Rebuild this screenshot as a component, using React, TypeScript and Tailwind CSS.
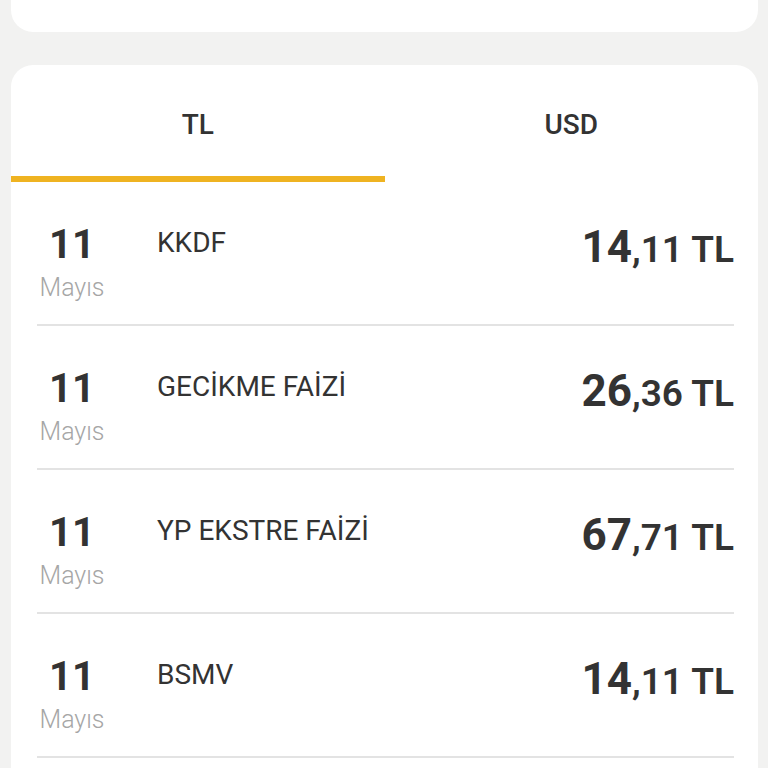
const rows = [
  { day: '11', month: 'Mayıs', title: 'KKDF', whole: '14', rest: ',11 TL' },
  { day: '11', month: 'Mayıs', title: 'GECİKME FAİZİ', whole: '26', rest: ',36 TL' },
  { day: '11', month: 'Mayıs', title: 'YP EKSTRE FAİZİ', whole: '67', rest: ',71 TL' },
  { day: '11', month: 'Mayıs', title: 'BSMV', whole: '14', rest: ',11 TL' },
]

export default function App() {
  return (
    <div
      className="flex h-[768px] flex-col overflow-hidden bg-[#f2f2f1] pl-[11px] pr-[10px] text-[#333]"
      style={{ fontFamily: 'Roboto, "Liberation Sans", sans-serif' }}
    >
      <div className="h-[32px] shrink-0 rounded-b-[22px] bg-white" />
      <div className="mt-[33px] flex-1 rounded-t-[22px] bg-white">
        <div className="flex">
          <Tab label="TL" active />
          <Tab label="USD" />
        </div>
        <div>
          {rows.map((r, i) => (
            <Row key={i} {...r} />
          ))}
        </div>
      </div>
    </div>
  )
}

function Tab({ label, active }: { label: string; active?: boolean }) {
  return (
    <div className="flex-1">
      <div className="flex h-[111px] items-center justify-center pt-[8px] text-[28px] font-medium leading-none text-[#333]">
        {label}
      </div>
      <div className={`h-[6px] ${active ? 'bg-[#efb321]' : 'bg-transparent'}`} />
    </div>
  )
}

function Row({ day, month, title, whole, rest }: { day: string; month: string; title: string; whole: string; rest: string }) {
  return (
    <div className="ml-[26px] mr-[24px] flex h-[144px] border-b-2 border-[#e3e3e3] pt-[43px]">
      <div className="flex w-[70px] flex-col items-center">
        <div className="text-[40px] font-bold leading-none text-[#333]">{day}</div>
        <div className="mt-[10px] text-[25px] font-light leading-none text-[#a6a6a6]">{month}</div>
      </div>
      <div className="ml-[50px] flex-1 pt-[4px] text-[28px] leading-none text-[#333]">{title}</div>
      <div className="flex items-baseline leading-none text-[#333]">
        <span className="text-[44px] font-bold">{whole}</span>
        <span className="text-[37px] font-semibold">{rest}</span>
      </div>
    </div>
  )
}
